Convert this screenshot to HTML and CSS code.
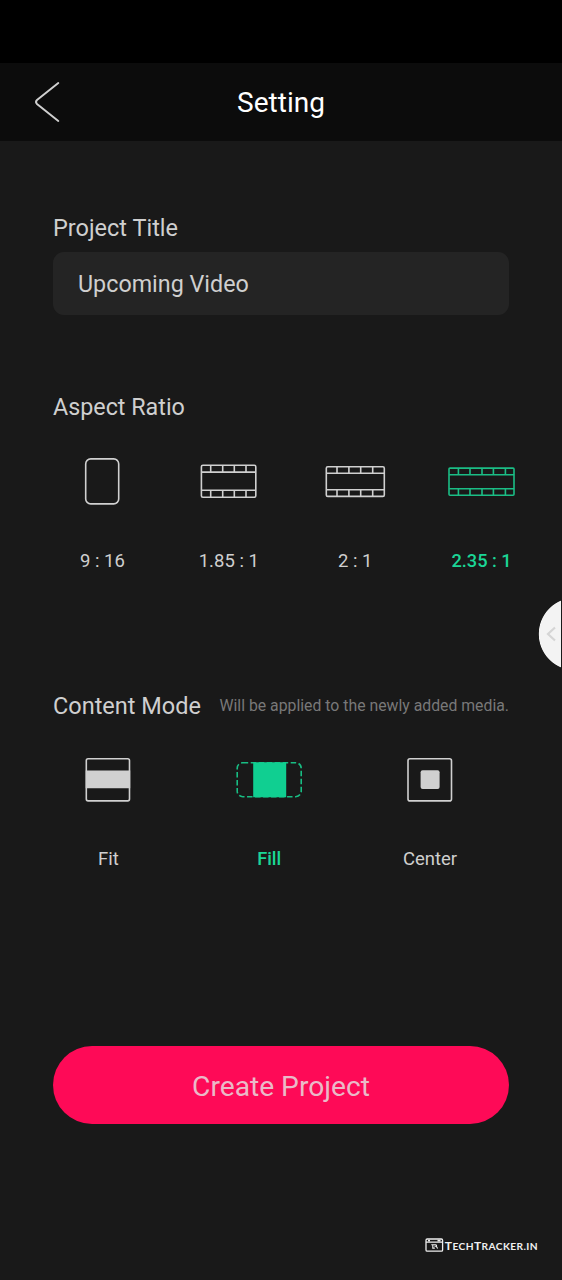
FILE: index.html
```html
<!DOCTYPE html>
<html lang="en">
<head>
<meta charset="utf-8">
<title>Setting</title>
<link rel="stylesheet" href="styles.css">
</head>
<body>
<div class="screen">
  <div class="status-bar"></div>
  <header class="header">
    <svg class="back" viewBox="0 0 30 44" width="30" height="44"><path d="M26.3 3 L5 20 Q3 22 5 24 L26.3 41"/></svg>
    <h1 class="title">Setting</h1>
  </header>
  <main class="content">
    <section class="project">
      <h2 class="label">Project Title</h2>
      <div class="field">Upcoming Video</div>
    </section>
    <section class="aspect">
      <h2 class="label">Aspect Ratio</h2>
      <div class="ratios">
        <div class="option">
          <svg class="icon" viewBox="0 0 70 50" width="70" height="50"><rect x="18.7" y="2.9" width="33" height="45" rx="5"/></svg>
          <span class="name">9 : 16</span>
        </div>
        <div class="option">
          <svg class="icon" viewBox="0 0 70 50" width="70" height="50"><rect x="7.4" y="9.3" width="54.4" height="31.9" rx="1.5"/><path d="M7.5 16.1H61.5M7.5 34.3H61.5M16.7 9v7M28.7 9v7M40.3 9v7M52 9v7M16.7 34v7M28.7 34v7M40.3 34v7M52 34v7"/></svg>
          <span class="name">1.85 : 1</span>
        </div>
        <div class="option">
          <svg class="icon" viewBox="0 0 70 50" width="70" height="50"><rect x="6.3" y="10.8" width="58" height="29.6" rx="1.5"/><path d="M6.5 17.3H64M6.5 33.7H64M17 11v6.3M28.9 11v6.3M40.7 11v6.3M52.7 11v6.3M17 34v6.3M28.9 34v6.3M40.7 34v6.3M52.7 34v6.3"/></svg>
          <span class="name">2 : 1</span>
        </div>
        <div class="option active">
          <svg class="icon" viewBox="0 0 70 50" width="70" height="50"><rect x="2" y="12.1" width="65" height="27.1" rx="1"/><path d="M2.2 18.7H67.2M2.2 32.7H67.2M11.4 12v6.7M23 12v6.7M35 12v6.7M46.4 12v6.7M58.4 12v6.7M11.4 32.7v6.5M23 32.7v6.5M35 32.7v6.5M46.4 32.7v6.5M58.4 32.7v6.5"/></svg>
          <span class="name">2.35 : 1</span>
        </div>
      </div>
    </section>
    <section class="mode">
      <div class="mode-head">
        <h2 class="label">Content Mode</h2>
        <span class="hint">Will be applied to the newly added media.</span>
      </div>
      <div class="modes">
        <div class="option">
          <svg class="icon" viewBox="0 0 70 50" width="70" height="50"><rect x="13.3" y="3.7" width="43.2" height="42.2" rx="1.8"/><path class="solid" d="M12.7 15.5H57.2V33.2H12.7z"/></svg>
          <span class="name">Fit</span>
        </div>
        <div class="option active">
          <svg class="icon" viewBox="0 0 70 50" width="70" height="50"><rect class="dashed" x="3.2" y="7.7" width="64" height="34" rx="5.5"/><path class="solid" d="M19.2 7.3H52.2V42.2H19.2z"/></svg>
          <span class="name">Fill</span>
        </div>
        <div class="option">
          <svg class="icon" viewBox="0 0 70 50" width="70" height="50"><rect x="13" y="3.7" width="43.5" height="42.2" rx="2"/><rect class="solid" x="25.6" y="15.2" width="19" height="18.8" rx="2"/></svg>
          <span class="name">Center</span>
        </div>
      </div>
    </section>
    <button class="create">Create Project</button>
  </main>
  <footer class="brand">
    <svg class="brand-icon" viewBox="0 0 19 15" width="19" height="15"><rect x="1" y="1" width="16.6" height="12.2" rx="1.2"/><path d="M1 4.1H17.6M3 2.5h2M12.5 2.5h3"/><path class="mark" d="M6.3 6.7h4.2q1.6 .2.8 1.6l1.3 2.3M7.8 7v3.1h2M9.5 8.3h2"/></svg>
    <span class="brand-name"><span class="cap">T</span>ECH<span class="cap">T</span>RACKER.IN</span>
  </footer>
  <div class="edge-handle">
    <svg class="handle-arrow" viewBox="0 0 12 18" width="12" height="18"><path d="M10 2.5 3 9l7 6.5"/></svg>
  </div>
</div>
</body>
</html>
```
FILE: styles.css
```css
body {
  margin: 0;
  background: #191919;
  font-family: Roboto, sans-serif;
  color: #cfcfcf;
}
.screen {
  position: relative;
  height: 1280px;
  overflow: hidden;
  display: flex;
  flex-direction: column;
  background: #191919;
}
.status-bar { height: 63px; background: #000; }
.header {
  display: grid;
  grid-template-columns: 30px 1fr 30px;
  align-items: center;
  height: 78px;
  padding: 0 32px;
  background: #0c0c0c;
}
.back, .icon {
  fill: none;
  stroke: #d0d0d0;
  stroke-width: 1.6;
}
.back { stroke-width: 1.9; stroke-linecap: round; }
.title {
  margin: 2px 0 0;
  text-align: center;
  font-size: 28px;
  font-weight: 400;
  line-height: 34px;
  color: #fff;
}
.content { padding: 72px 53px 0; }
.label {
  margin: 0;
  font-size: 23.5px;
  font-weight: 400;
  line-height: 30px;
  white-space: nowrap;
}
.field {
  height: 63px;
  margin-top: 9px;
  padding-left: 25px;
  border-radius: 11px;
  background: #242424;
  font-size: 23.3px;
  line-height: 64px;
}
.aspect { margin-top: 77px; }
.aspect .label { font-size: 23.3px; }
.ratios {
  display: grid;
  grid-template-columns: repeat(4, 126.4px);
  margin: 34px 0 0 -13.8px;
}
.option {
  display: flex;
  flex-direction: column;
  align-items: center;
  gap: 42px;
}
.ratios .option { gap: 43px; }
.name { font-size: 18.5px; line-height: 24px; }
.active { color: #1bd696; }
.active .name { font-size: 18.2px; font-weight: 500; }
.active .icon { stroke: #1bbd85; }
.solid { fill: #d0d0d0; stroke: none; }
.active .solid { fill: #10cf91; }
.active .dashed { stroke-dasharray: 5.5 2.5; stroke: #18bd83; }
.mode { margin-top: 118px; }
.mode-head {
  display: flex;
  justify-content: space-between;
  align-items: center;
}
.hint { font-size: 15.8px; line-height: 20px; color: #787878; white-space: nowrap; }
.modes {
  display: grid;
  grid-template-columns: repeat(3, 160.8px);
  margin: 34px 0 0 -25px;
}
.create {
  display: block;
  width: 456px;
  height: 78px;
  margin-top: 175px;
  padding: 3px 0 0;
  border: 0;
  border-radius: 39px;
  background: #fe0a57;
  color: #eabac8;
  font: 400 28.2px/34px Roboto, sans-serif;
}
.brand {
  display: flex;
  align-items: center;
  gap: 1px;
  margin: auto 24px 26px auto;
}
.brand-icon { fill: none; stroke: #eee; stroke-width: 1.3; }
.brand-icon .mark { stroke-width: 1.1; }
.brand-name {
  padding-top: 1px;
  font: 700 10.2px/15px Lato, sans-serif;
  letter-spacing: .4px;
  color: #f0f0f0;
}
.cap { font-size: 12px; }
.edge-handle {
  position: absolute;
  left: 538px;
  top: 600px;
  width: 22.5px;
  height: 68px;
  overflow: hidden;
  display: flex;
  align-items: center;
  background: radial-gradient(circle at 37px 34px, #f3f3f3 35.8px, transparent 36.6px);
}
.handle-arrow { margin-left: 7px; fill: none; stroke: #d5d5d5; stroke-width: 2.2; }
```
